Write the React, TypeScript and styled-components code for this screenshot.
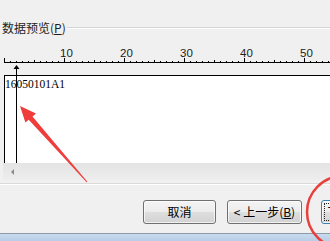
import React from 'react';
import styled, { createGlobalStyle } from 'styled-components';

const GlobalStyle = createGlobalStyle`
  html, body {
    margin: 0;
    padding: 0;
    background: #f0f0f0;
  }
  body {
    width: 330px;
    height: 241px;
    overflow: hidden;
  }
`;

const Window = styled.div`
  position: relative;
  width: 330px;
  height: 241px;
  overflow: hidden;
  display: flex;
  flex-direction: column;
  background: #f0f0f0;
  font-family: 'Noto Sans CJK SC', 'Noto Sans', sans-serif;
  font-size: 12px;
  color: #1e1e1e;
`;

const GroupHeader = styled.div`
  display: flex;
  align-items: center;
  height: 16px;
  margin-top: 20px;
  padding-left: 2px;
  flex-shrink: 0;
`;

const GroupLabel = styled.span`
  line-height: 16px;
  white-space: nowrap;
  u {
    text-decoration: underline;
  }
`;

const GroupLine = styled.div`
  flex: 1;
  margin-left: 1px;
  border-top: 1px solid #d5d5d5;
  border-bottom: 1px solid #ffffff;
`;

const RulerSvg = styled.svg`
  display: block;
  width: 330px;
  height: 39px;
  flex-shrink: 0;
  text {
    font-family: 'Liberation Sans', Arial, sans-serif;
    font-size: 11.5px;
    fill: #222;
  }
`;

const DataBox = styled.div`
  position: relative;
  height: 87px;
  margin-left: 4px;
  background: #ffffff;
  border-top: 1px solid #000;
  border-left: 1px solid #000;
  flex-shrink: 0;
`;

const DataText = styled.div`
  padding-top: 1px;
  font-family: 'Liberation Serif', 'Times New Roman', serif;
  font-size: 11.5px;
  line-height: 14px;
  color: #000;
`;

const Cursor = styled.div`
  position: absolute;
  left: 11px;
  top: 0;
  bottom: 0;
  width: 1px;
  background: #000;
`;

const ScrollBar = styled.div`
  display: flex;
  align-items: center;
  height: 17px;
  margin-left: 3px;
  padding-left: 8px;
  background: linear-gradient(#e4e4e4, #ededed);
  flex-shrink: 0;
`;

const ScrollArrow = styled.span`
  width: 0;
  height: 0;
  border-top: 3px solid transparent;
  border-bottom: 3px solid transparent;
  border-right: 3px solid #8a8a8a;
`;

const Separator = styled.div`
  margin-top: 3px;
  border-top: 1px solid #dadada;
  border-bottom: 1px solid #ffffff;
  flex-shrink: 0;
`;

const ButtonRow = styled.div`
  display: flex;
  margin-top: 15px;
  padding-left: 143px;
  flex-shrink: 0;
`;

const Button = styled.button<{ $width: number; $offset?: number; $default?: boolean }>`
  position: relative;
  box-sizing: border-box;
  flex-shrink: 0;
  width: ${({ $width }) => $width}px;
  height: 24px;
  margin: 0 0 0 ${({ $offset }) => $offset ?? 0}px;
  padding: 0;
  border: 1px solid ${({ $default }) => ($default ? '#3c7fb1' : '#707070')};
  border-radius: 3px;
  background: linear-gradient(#f4f4f4 0%, #ececec 50%, #dedede 51%, #d2d2d2 100%);
  box-shadow: inset 0 0 0 1px rgba(255, 255, 255, 0.7);
  font-family: 'Noto Sans CJK SC', 'Noto Sans', sans-serif;
  font-size: 12px;
  line-height: 20px;
  color: #000;
  white-space: nowrap;
  u {
    text-decoration: underline;
  }
  ${({ $default }) =>
    $default &&
    `
    &::after {
      content: '';
      position: absolute;
      inset: 2px;
      border: 1px dotted #222;
    }
  `}
`;

const Frame = styled.div`
  margin-top: auto;
  height: 7px;
  border-top: 1px solid #8c9aab;
  background: linear-gradient(#c8dbef, #b8cee6);
  flex-shrink: 0;
`;

const Overlay = styled.svg`
  position: absolute;
  left: 0;
  top: 0;
  width: 330px;
  height: 241px;
  pointer-events: none;
`;

const Ruler = () => {
  const ticks = [];
  for (let n = 0; n <= 55; n++) {
    const h = n % 10 === 0 ? 4 : n % 5 === 0 ? 2 : 1;
    ticks.push(<rect key={n} x={4 + 6 * n} y={26 - h} width={1} height={h} fill="#000" />);
  }
  return (
    <RulerSvg viewBox="0 0 330 39">
      <rect x={4} y={26} width={326} height={1} fill="#000" />
      {ticks}
      {[10, 20, 30, 40, 50].map((n) => (
        <text key={n} x={4 + 6 * n - 4} y={21}>
          {n}
        </text>
      ))}
      <polygon points="16.5,29 13.5,33 19.5,33" fill="#000" />
      <rect x={16} y={31} width={1} height={8} fill="#000" />
    </RulerSvg>
  );
};

const App = () => {
  return (
    <>
      <GlobalStyle />
      <Window>
        <GroupHeader>
          <GroupLabel>
            数据预览(<u>P</u>)
          </GroupLabel>
          <GroupLine />
        </GroupHeader>
        <Ruler />
        <DataBox>
          <DataText>16050101A1</DataText>
          <Cursor />
        </DataBox>
        <ScrollBar>
          <ScrollArrow />
        </ScrollBar>
        <Separator />
        <ButtonRow>
          <Button $width={73}>取消</Button>
          <Button $width={75} $offset={11}>
            &lt; 上一步(<u>B</u>)
          </Button>
          <Button $width={75} $offset={19} $default>
            下一步(<u>N</u>) &gt;
          </Button>
        </ButtonRow>
        <Frame />
        <Overlay viewBox="0 0 330 241">
          <polygon
            points="20,106 36,113.4 32.5,116.4 87.4,181.7 86.6,182.3 28.7,119.7 25.4,122.6"
            fill="#ee3d3a"
          />
          <circle cx={343} cy={212} r={36} fill="none" stroke="#e8403c" strokeWidth={2.5} />
        </Overlay>
      </Window>
    </>
  );
};

export default App;
